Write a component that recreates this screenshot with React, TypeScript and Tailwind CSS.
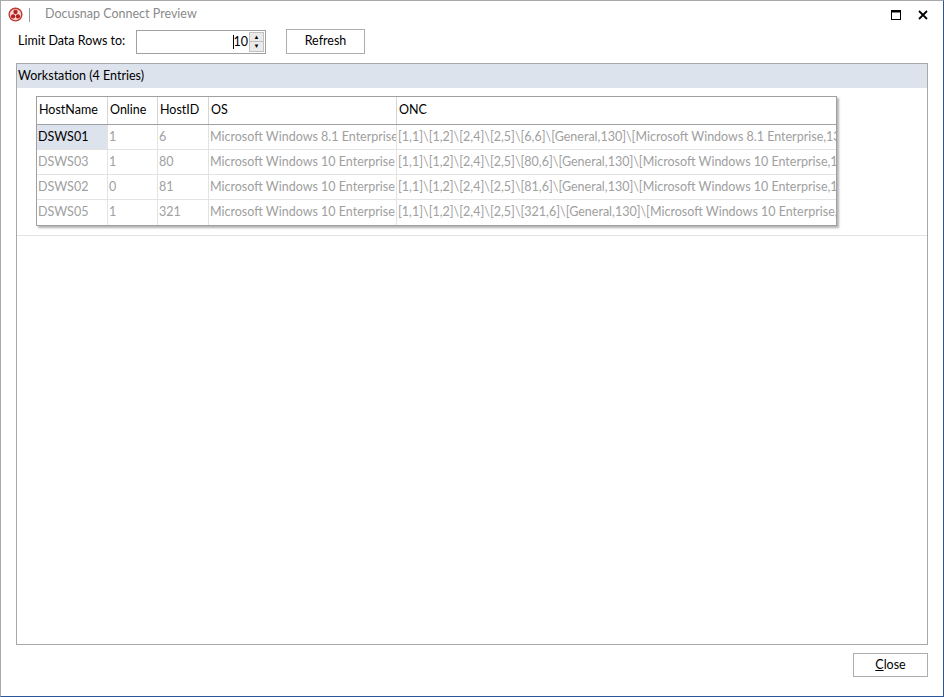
const rows = [
  { host: "DSWS01", online: "1", id: "6", os: "Microsoft Windows 8.1 Enterprise", onc: "[1,1]\\[1,2]\\[2,4]\\[2,5]\\[6,6]\\[General,130]\\[Microsoft Windows 8.1 Enterprise,131]" },
  { host: "DSWS03", online: "1", id: "80", os: "Microsoft Windows 10 Enterprise", onc: "[1,1]\\[1,2]\\[2,4]\\[2,5]\\[80,6]\\[General,130]\\[Microsoft Windows 10 Enterprise,131]" },
  { host: "DSWS02", online: "0", id: "81", os: "Microsoft Windows 10 Enterprise", onc: "[1,1]\\[1,2]\\[2,4]\\[2,5]\\[81,6]\\[General,130]\\[Microsoft Windows 10 Enterprise,131]" },
  { host: "DSWS05", online: "1", id: "321", os: "Microsoft Windows 10 Enterprise", onc: "[1,1]\\[1,2]\\[2,4]\\[2,5]\\[321,6]\\[General,130]\\[Microsoft Windows 10 Enterprise,131]" },
];

const cols = ["w-[71px]", "w-[50px]", "w-[51px]", "w-[188px]", "w-[439px]"];

const App = () => {
  return (
    <div
      className="w-[944px] h-[697px] bg-white flex flex-col border-l border-t border-[#aaaaaa] border-r border-b border-r-[#2b579a] border-b-[#2b579a] text-[12.5px] text-black overflow-hidden"
      style={{ fontFamily: 'Lato, "Open Sans", sans-serif' }}
    >
      {/* title bar */}
      <div className="h-[27px] flex items-center pl-[7px] pr-[15px] shrink-0">
        <svg width="15" height="15" viewBox="0 0 16 16">
          <circle cx="8" cy="8" r="7.5" fill="#c0392b" />
          <circle cx="8" cy="8" r="6" fill="#f3d6d6" />
          <circle cx="8" cy="5.3" r="2.3" fill="#b22222" />
          <circle cx="5.4" cy="10" r="2.3" fill="#b22222" />
          <circle cx="10.6" cy="10" r="2.3" fill="#b22222" />
        </svg>
        <div className="w-px h-[14px] bg-[#999] ml-[6px]" />
        <span className="ml-[15px] text-[12.5px] text-[#8a8a8a]">Docusnap Connect Preview</span>
        <div className="flex-1" />
        <svg width="10" height="10" viewBox="0 0 10 10" className="mr-[17px]">
          <rect x="0.5" y="0.5" width="9" height="9" fill="none" stroke="#000" />
          <rect x="0" y="0" width="10" height="2.5" fill="#000" />
        </svg>
        <svg width="10" height="10" viewBox="0 0 10 10">
          <path d="M1 1 L9 9 M9 1 L1 9" stroke="#000" strokeWidth="1.8" />
        </svg>
      </div>

      {/* toolbar */}
      <div className="flex items-center h-[27px] pl-[17px] shrink-0">
        <span className="w-[118px]">Limit Data Rows to:</span>
        <div className="w-[130px] h-[24px] border border-[#a0a0a0] flex items-center justify-end">
          <span className="border-l border-black leading-[14px]">10</span>
          <div className="w-[15px] h-[20px] ml-[1px] mr-[1px] flex flex-col border border-[#c0c0c0] bg-[#eaeaea]">
            <div className="flex-1 flex items-center justify-center text-[6px] leading-none">▲</div>
            <div className="flex-1 flex items-center justify-center text-[6px] leading-none border-t border-[#c0c0c0]">▼</div>
          </div>
        </div>
        <button className="ml-[20px] w-[79px] h-[25px] border border-[#adadad] bg-white">Refresh</button>
      </div>

      {/* panel */}
      <div className="mt-[8px] ml-[15px] mr-[15px] h-[582px] border border-[#a8a8a8] flex flex-col shrink-0">
        <div className="h-[24px] bg-[#dde3ec] flex items-center pl-[1px]">Workstation (4 Entries)</div>
        <div className="h-[148px] border-b border-[#e3e3e3] pl-[19px] pt-[8px]">
          <div className="w-[801px] border border-[#a0a0a0] shadow-[2px_2px_2px_rgba(0,0,0,0.3)]">
            <div className="flex h-[28px] border-b border-[#a0a0a0]">
              {["HostName", "Online", "HostID", "OS", "ONC"].map((h, i) => (
                <div key={h} className={`${cols[i]} px-[2px] flex items-center ${i < 4 ? "border-r border-[#d5d5d5]" : ""}`}>{h}</div>
              ))}
            </div>
            {rows.map((r, ri) => (
              <div key={r.host} className={`flex h-[25px] ${ri < 3 ? "border-b border-[#e3e3e3]" : ""}`}>
                {[r.host, r.online, r.id, r.os, r.onc].map((v, i) => (
                  <div
                    key={i}
                    className={`${cols[i]} pl-[1px] flex items-center whitespace-nowrap overflow-hidden ${i < 4 ? "border-r border-[#e3e3e3]" : ""} ${ri === 0 && i === 0 ? "bg-[#dde3ec] text-black" : "text-[#a0a0a0]"}`}
                  >
                    {v}
                  </div>
                ))}
              </div>
            ))}
          </div>
        </div>
      </div>

      {/* footer */}
      <div className="flex justify-end pr-[15px] mt-[8px]">
        <button className="w-[75px] h-[24px] border border-[#adadad] bg-white">
          <span className="underline">C</span>lose
        </button>
      </div>
    </div>
  );
};

export default App;
